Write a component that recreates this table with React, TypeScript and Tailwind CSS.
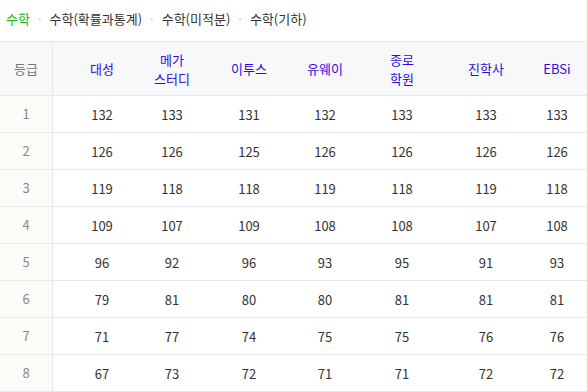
import React from 'react';

const tabs = ['수학', '수학(확률과통계)', '수학(미적분)', '수학(기하)'];

const headers: string[][] = [
  ['대성'],
  ['메가', '스터디'],
  ['이투스'],
  ['유웨이'],
  ['종로', '학원'],
  ['진학사'],
  ['EBSi'],
];

const rows: number[][] = [
  [132, 133, 131, 132, 133, 133, 133],
  [126, 126, 125, 126, 126, 126, 126],
  [119, 118, 118, 119, 118, 119, 118],
  [109, 107, 109, 108, 108, 107, 108],
  [96, 92, 96, 93, 95, 91, 93],
  [79, 81, 80, 80, 81, 81, 81],
  [71, 77, 74, 75, 75, 76, 76],
  [67, 73, 72, 71, 71, 72, 72],
];

// column widths tuned so every cell's text sits where the reference has it
const grid = 'grid grid-cols-[53px_98px_42px_112px_40px_114px_54px_88px]';

export default function App() {
  return (
    <div className="w-[587px] h-[392px] overflow-hidden bg-white font-['Noto_Sans_CJK_KR','Liberation_Sans',sans-serif] text-[13px]">
      {/* subject tabs */}
      <div className="flex items-center h-[41px] pl-[6px] pb-[4px] text-[13px] text-[#333]">
        {tabs.map((t, i) => (
          <React.Fragment key={t}>
            {i > 0 && <span className="mx-[7px] text-[#aaa] text-[10px]">·</span>}
            <span className={i === 0 ? 'text-[#1cb51c]' : ''}>{t}</span>
          </React.Fragment>
        ))}
      </div>

      <div className="w-[601px] border-t border-[#e6e7ec]">
        {/* header */}
        <div className={`${grid} h-[54px] bg-[#f7f8fa] border-b border-[#e6e7ec]`}>
          <div className="flex items-center justify-center border-r border-[#e6e7ec] text-[#777]">등급</div>
          {headers.map((h) => (
            <div key={h.join('')} className="flex flex-col items-center justify-center leading-[19px] text-[#3008e0] whitespace-nowrap">
              {h.map((line) => (
                <span key={line}>{line}</span>
              ))}
            </div>
          ))}
        </div>

        {/* body */}
        {rows.map((r, i) => (
          <div key={i} className={`${grid} h-[37px] border-b border-[#e8e9ee]`}>
            <div className="flex items-center justify-center bg-[#fbfbf7] border-r border-[#e6e7ec] text-[#888]">
              {i + 1}
            </div>
            {r.map((v, j) => (
              <div key={j} className="flex items-center justify-center pt-[2px] text-[#333] whitespace-nowrap">
                {v}
              </div>
            ))}
          </div>
        ))}
      </div>
    </div>
  );
}
